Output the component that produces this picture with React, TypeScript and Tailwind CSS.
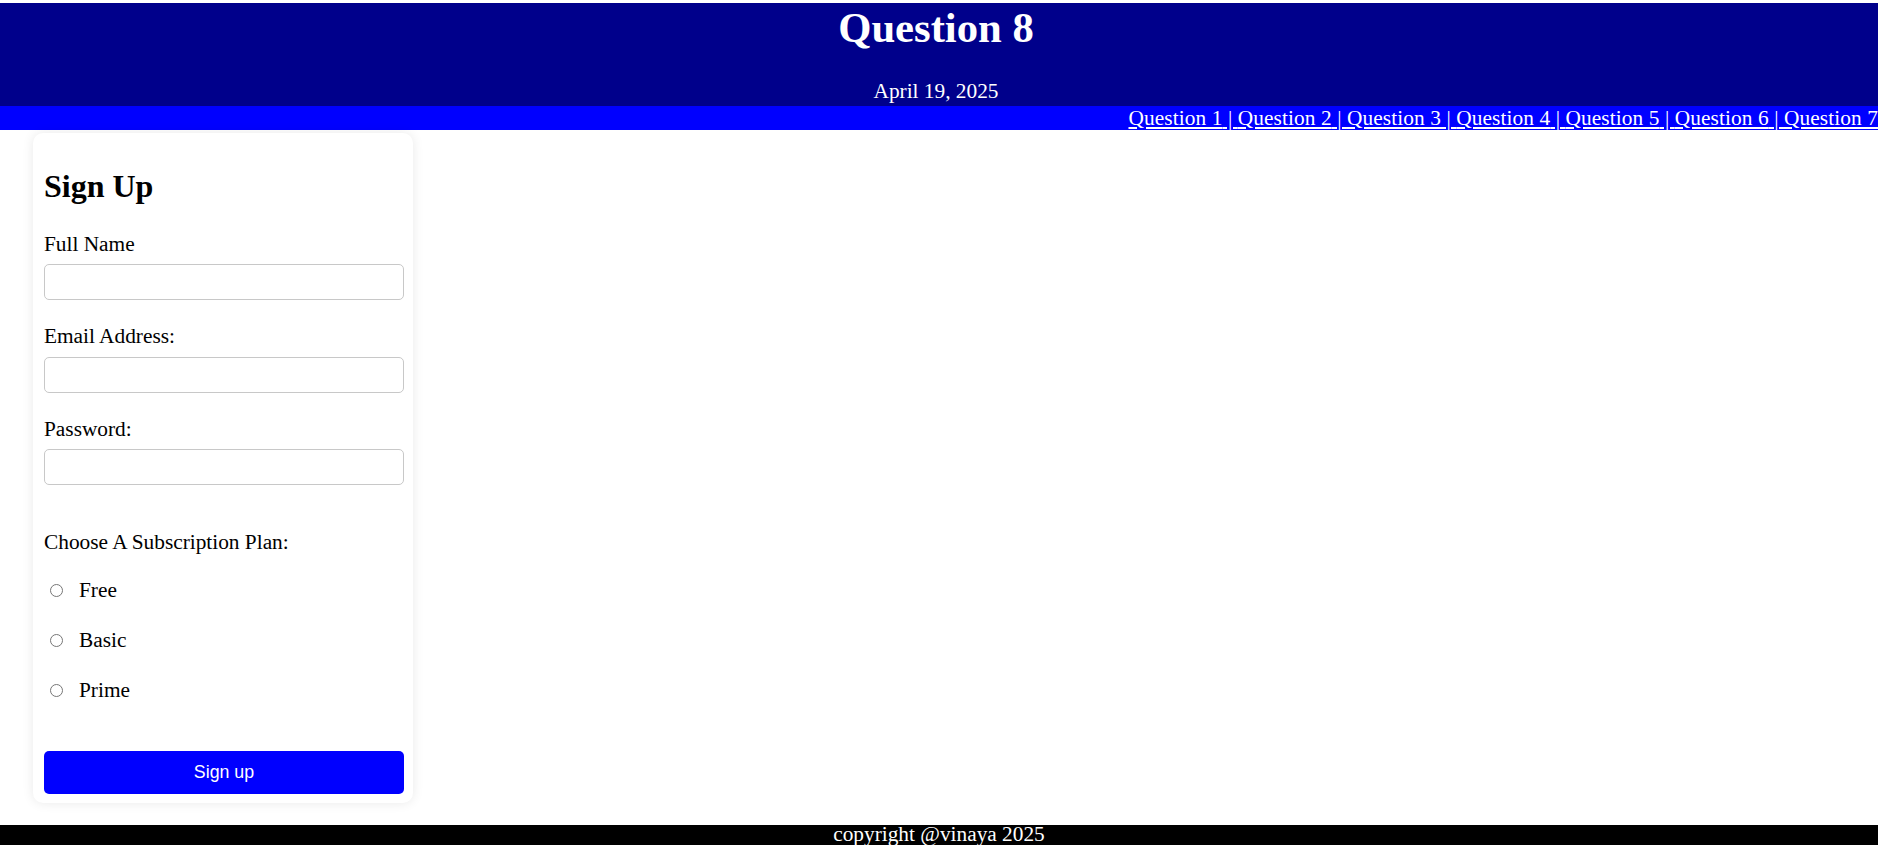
export default function App() {
  const links = [1, 2, 3, 4, 5, 6, 7];
  const plans = ["Free", "Basic", "Prime"];
  return (
    <div className="w-[1878px] bg-white pt-[3px] font-['Liberation_Serif',serif] text-[21.33px] text-black">
      <header className="bg-[#00008b] pb-[3px] text-center text-white">
        <h1 className="pr-[6px] text-[42.67px] font-bold leading-[49px]">Question 8</h1>
        <p className="mt-[27px] pr-[6px] leading-[24px]">April 19, 2025</p>
      </header>
      <nav className="bg-[#0000ff] text-right leading-[24px] tracking-[0.1px] text-white">
        {links.map((n, i) => (
          <a key={n} href="#" className="underline">
            {`Question ${n}`}
            {i < links.length - 1 ? " | " : ""}
          </a>
        ))}
      </nav>
      <main className="pb-[22px] pl-[33px] pt-[3px]">
        <div className="flex w-[380px] flex-col rounded-[10px] bg-white pb-[9px] pl-[11px] pr-[9px] pt-[35px] shadow-[0_0_12px_rgba(0,0,0,0.09)]">
          <h2 className="text-[32px] font-bold leading-[37px]">Sign Up</h2>
          <label className="mt-[27px] leading-[24px]">Full Name</label>
          <div className="mt-[8px] h-[36px] w-[360px] rounded-[5px] border border-[#c8c8c8] bg-white" />
          <label className="mt-[24px] leading-[24px]">Email Address:</label>
          <div className="mt-[8.5px] h-[36px] w-[360px] rounded-[5px] border border-[#c8c8c8] bg-white" />
          <label className="mt-[24px] leading-[24px]">Password:</label>
          <div className="mt-[8.5px] h-[36px] w-[360px] rounded-[5px] border border-[#c8c8c8] bg-white" />
          <p className="mt-[45px] leading-[24px]">Choose A Subscription Plan:</p>
          <div className="mt-[24px] flex flex-col gap-[26px]">
            {plans.map((p) => (
              <div key={p} className="flex h-[24px] items-center leading-[24px]">
                <span className="ml-[6px] h-[13px] w-[13px] rounded-full border border-[#767676] bg-white" />
                <span className="ml-[16px]">{p}</span>
              </div>
            ))}
          </div>
          <button className="mt-[49px] flex h-[43px] w-[360px] items-center justify-center rounded-[5px] bg-[#0000ff] font-['Liberation_Sans',Arial,sans-serif] text-[17.78px] text-white">
            Sign up
          </button>
        </div>
      </main>
      <footer className="h-[40px] bg-black text-center leading-[19px] text-white">copyright @vinaya 2025</footer>
    </div>
  );
}
